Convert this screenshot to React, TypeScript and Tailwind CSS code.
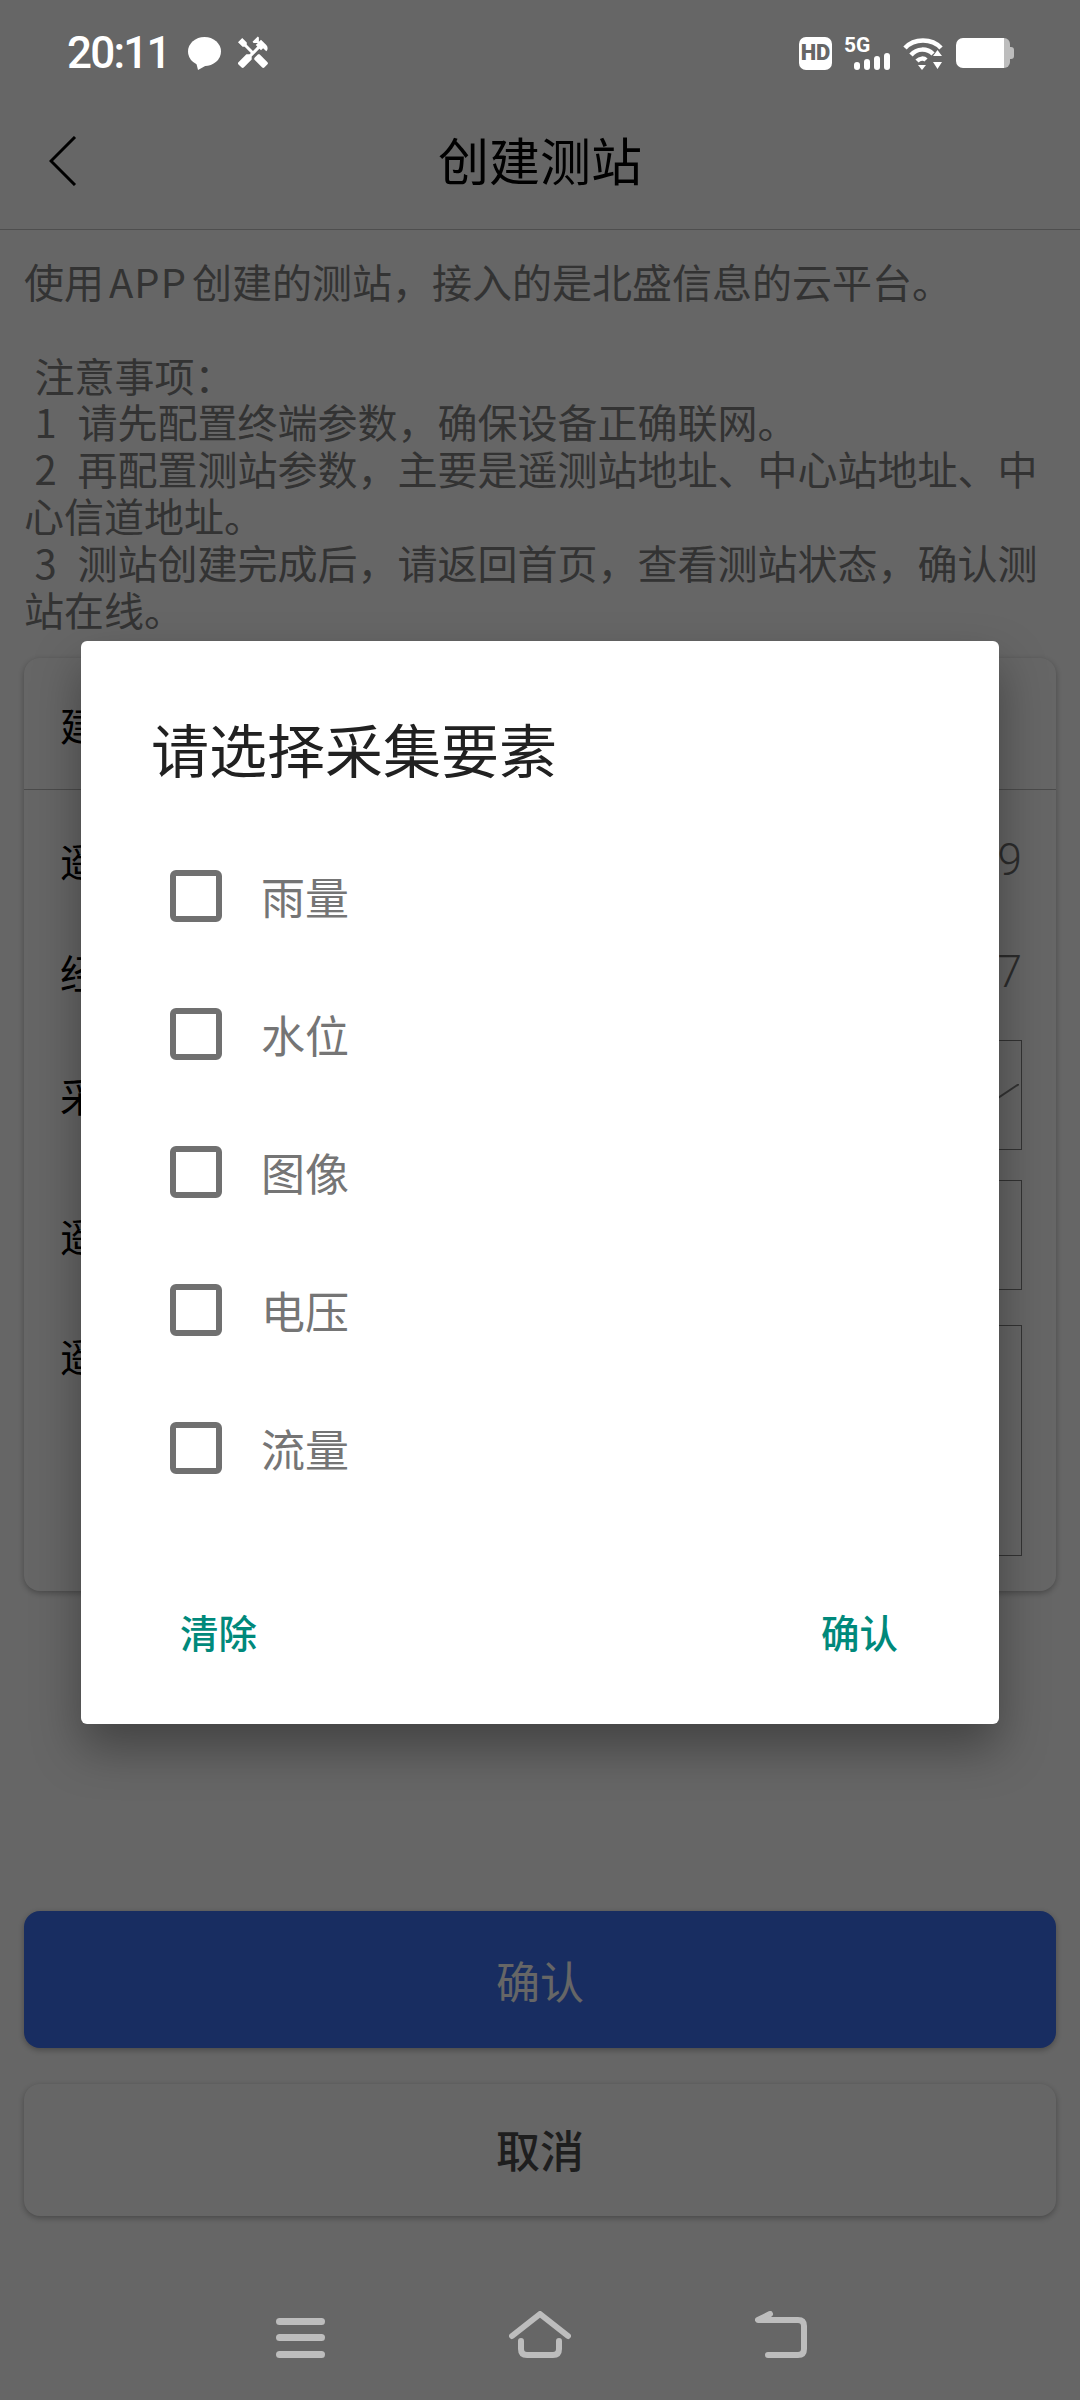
import { MdHandyman } from "react-icons/md"

const sans = "font-['Noto_Sans_CJK_SC','Noto_Sans',sans-serif]"

const elements = ["雨量", "水位", "图像", "电压", "流量"]

function StatusBar() {
    return (
        <div className="relative z-10 h-[90px] flex items-center pl-[67px] pr-[66px] pt-[16px] text-white">
            <span className="font-['Roboto',sans-serif] font-medium text-[44px] leading-none tracking-[-1.8px]">20:11</span>
            <svg viewBox="0 0 33 33" className="w-[33px] h-[33px] ml-[18px]" fill="white">
                <ellipse cx="16.5" cy="14.5" rx="16.5" ry="14.5" />
                <path d="M8 25 L10 33 L19 28 Z" />
            </svg>
            <MdHandyman className="w-[36px] h-[36px] ml-[14px]" />
            <div className="ml-auto flex items-center">
                <div className="w-[33px] h-[33px] rounded-[7px] bg-white flex items-center justify-center font-['Roboto',sans-serif] font-black text-[22px] leading-none text-[#666]">
                    HD
                </div>
                <div className="relative w-[46px] h-[33px] ml-[12px]">
                    <span className="absolute left-0 top-[-2px] font-['Roboto',sans-serif] font-bold text-[21px] leading-none">5G</span>
                    <svg viewBox="0 0 36 17" className="absolute left-[10px] top-[16px] w-[36px] h-[17px]" fill="white">
                        <rect x="0" y="9" width="6" height="8" rx="3" />
                        <rect x="10" y="6" width="6" height="11" rx="3" />
                        <rect x="20" y="3" width="6" height="14" rx="3" />
                        <rect x="30" y="0" width="6" height="17" rx="3" />
                    </svg>
                </div>
                <svg viewBox="0 0 40 33" className="w-[40px] h-[33px] ml-[13px]" fill="none" stroke="white" strokeWidth="4.5">
                    <path d="M2 11 C11 1 29 1 38 11" />
                    <path d="M8 18 C14 11 24 11 30 17" />
                    <path d="M14 24 C17 21 21 21 23 23" />
                    <path d="M15 28 L23 28 L19 33 Z" fill="white" stroke="none" />
                    <path d="M30 19 L39 19 L34.5 13 Z M30 25 L39 25 L34.5 32 Z" fill="white" stroke="none" />
                </svg>
                <div className="flex items-center ml-[13px]">
                    <div className="w-[48px] h-[30px] rounded-l-[7px] bg-white" />
                    <div className="w-[6px] h-[30px] rounded-r-[6px] bg-[#bdbdbd]" />
                    <div className="w-[4px] h-[12px] rounded-r-[3px] bg-[#bdbdbd]" />
                </div>
            </div>
        </div>
    )
}

function Toolbar() {
    return (
        <div className="relative h-[140px] flex items-center justify-center border-b border-[#c4c4c4]">
            <svg viewBox="0 0 28 50" className="absolute left-[49px] top-[46px] w-[28px] h-[50px]" fill="none" stroke="black" strokeWidth="3">
                <path d="M26 1 L2 25 L26 49" />
            </svg>
            <span className="text-[51px] leading-none text-black">创建测站</span>
        </div>
    )
}

function Intro() {
    return (
        <div className="px-[24px] pt-[28px] text-[40px] leading-[46.8px] text-[#808080] whitespace-pre-wrap [word-spacing:1.5px]">
            <p>使用<span className="px-[5px] tracking-[1px]">APP</span>创建的测站，接入的是北盛信息的云平台。</p>
            <p>&nbsp;</p>
            <p> 注意事项：</p>
            <p> 1  请先配置终端参数，确保设备正确联网。</p>
            <p> 2  再配置测站参数，主要是遥测站地址、中心站地址、中心信道地址。</p>
            <p> 3  测站创建完成后，请返回首页，查看测站状态，确认测站在线。</p>
        </div>
    )
}

function FormCard() {
    return (
        <div className="mx-[24px] mt-[26px] h-[933px] rounded-[16px] bg-white shadow-[0_2px_6px_rgba(0,0,0,0.3)] text-[40px] text-black">
            <div className="h-[132px] flex items-center px-[36px] border-b border-[#bbb]">建站信息</div>
            <div className="pl-[36px] pr-[34px] pt-[14px]">
                <div className="h-[112px] flex items-center justify-between">
                    <span>遥测站纬度</span>
                    <span className="font-['Roboto',sans-serif] font-light text-[44px] text-[#6f6f6f]">9</span>
                </div>
                <div className="h-[112px] flex items-center justify-between">
                    <span>经度</span>
                    <span className="font-['Roboto',sans-serif] font-light text-[44px] text-[#6f6f6f]">7</span>
                </div>
                <div className="mt-[12px] h-[110px] flex items-center justify-between">
                    <span>采集要素</span>
                    <div className="relative w-[500px] h-[110px] border border-[#808080]">
                        <svg viewBox="0 0 30 20" className="absolute right-[2px] top-[43px] w-[30px] h-[20px]" fill="none" stroke="#808080" strokeWidth="2">
                            <path d="M30 0 L0 20" />
                        </svg>
                    </div>
                </div>
                <div className="mt-[30px] h-[110px] flex items-center justify-between">
                    <span>遥测站地址</span>
                    <div className="w-[500px] h-[110px] border border-[#808080]" />
                </div>
                <div className="mt-[35px] h-[231px] flex items-start justify-between">
                    <span>遥测站备注</span>
                    <div className="w-[500px] h-[231px] border border-[#808080]" />
                </div>
            </div>
        </div>
    )
}

function Actions() {
    return (
        <div className="px-[24px] pt-[320px] text-[44px]">
            <div className="h-[137px] rounded-[16px] bg-[#3c70f2] text-white flex items-center justify-center shadow-[0_2px_6px_rgba(0,0,0,0.3)]">
                确认
            </div>
            <div className="mt-[36px] h-[132px] pb-[3px] rounded-[16px] bg-white text-[#4d4d4d] font-medium flex items-center justify-center shadow-[0_2px_6px_rgba(0,0,0,0.3)]">
                取消
            </div>
        </div>
    )
}

function NavBar() {
    return (
        <div className="relative z-10 ml-[276px] mt-[95px] w-[531px] flex justify-between items-start">
            <svg viewBox="0 0 49 47" className="w-[49px] h-[47px]" fill="#bdbdbd">
                <rect x="0" y="7" width="49" height="7" rx="3.5" />
                <rect x="0" y="23" width="49" height="7" rx="3.5" />
                <rect x="0" y="40" width="49" height="7" rx="3.5" />
            </svg>
            <svg viewBox="0 0 62 47" className="w-[62px] h-[47px]" fill="none" stroke="#bdbdbd" strokeWidth="6" strokeLinecap="round" strokeLinejoin="round">
                <path d="M3 25 L31 3 L59 25" />
                <path d="M12 30 V38 Q12 44 18 44 H44 Q50 44 50 38 V30" />
            </svg>
            <svg viewBox="0 0 52 47" className="w-[52px] h-[47px]" fill="none" stroke="#bdbdbd" strokeWidth="6" strokeLinecap="round" strokeLinejoin="round">
                <path d="M15 3 L3 9 H43 Q49 9 49 15 V38 Q49 44 43 44 H13" />
            </svg>
        </div>
    )
}

function ElementDialog() {
    return (
        <div className="absolute inset-0 bg-black/60 flex justify-center items-start pt-[641px]">
            <div className="w-[918px] h-[1083px] rounded-[6px] bg-white pt-[77px] shadow-[0_24px_48px_rgba(0,0,0,0.35)]">
                <h2 className="pl-[70px] h-[60px] flex items-center text-[58px] leading-none text-[#212121]">请选择采集要素</h2>
                <div className="mt-[49px]">
                    {elements.map((label) => (
                        <div key={label} className="h-[138px] flex items-center pl-[89px]">
                            <div className="w-[52px] h-[52px] rounded-[6px] border-[6px] border-[#707070]" />
                            <span className="ml-[39px] text-[44px] leading-none text-[#757575]">{label}</span>
                        </div>
                    ))}
                </div>
                <div className="mt-[91px] flex justify-between pl-[99px] pr-[101px] text-[38.5px] leading-[46px] font-medium text-[#00897b]">
                    <span>清除</span>
                    <span>确认</span>
                </div>
            </div>
        </div>
    )
}

export default function App() {
    return (
        <div className={`relative w-[1080px] h-[2400px] overflow-hidden bg-white ${sans}`}>
            <StatusBar />
            <Toolbar />
            <Intro />
            <FormCard />
            <Actions />
            <NavBar />
            <ElementDialog />
        </div>
    )
}
